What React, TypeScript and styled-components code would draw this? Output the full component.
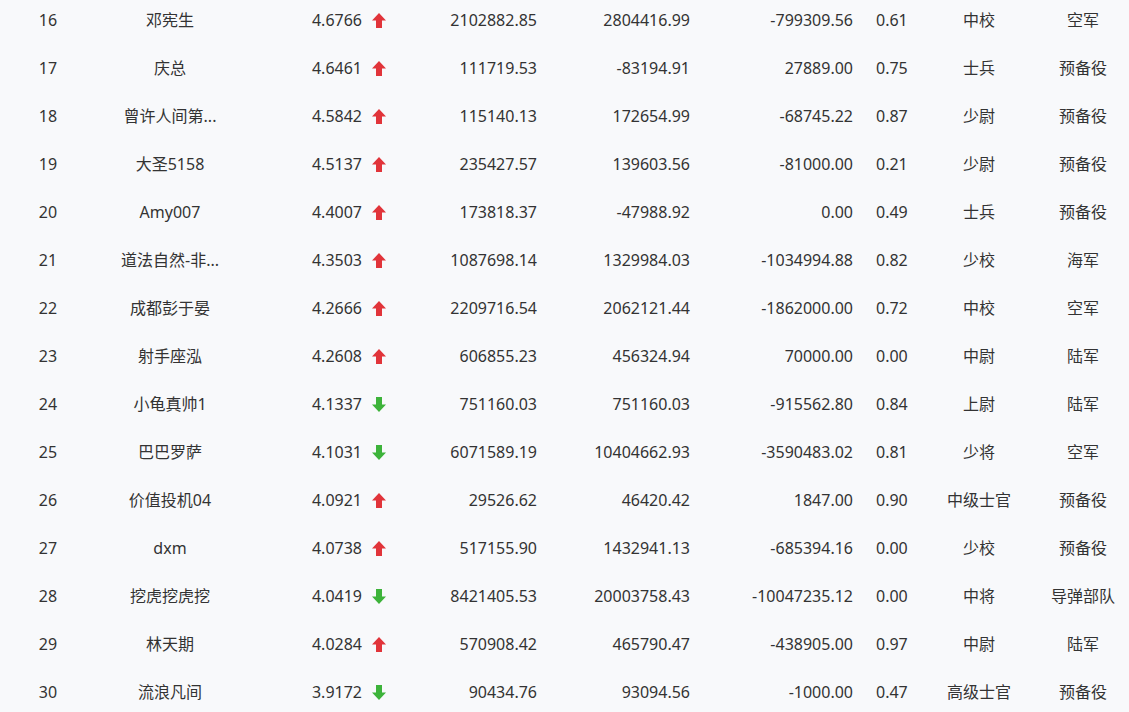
import React from "react";
import styled, { createGlobalStyle } from "styled-components";

const GlobalStyle = createGlobalStyle`
  html, body {
    margin: 0;
    padding: 0;
    overflow: hidden;
    background: #f8f9fb;
  }
  body {
    font-family: "Noto Sans", "Noto Sans CJK SC", sans-serif;
    color: #333;
  }
`;

const Page = styled.div`
  width: 1129px;
  height: 712px;
  overflow: hidden;
  background: #f8f9fb;
`;

const Table = styled.div`
  margin-top: -4px;
  display: flex;
  flex-direction: column;
`;

const Row = styled.div`
  display: grid;
  grid-template-columns: 96px 148px 156px 150px 150px 165px 65px 98px 101px;
  height: 48px;
  align-items: center;
  font-size: 16px;
  line-height: 20px;
  color: #333;
`;

type Align = "left" | "center" | "right";

const Cell = styled.div<{ $align?: Align; $pl?: number; $pr?: number }>`
  text-align: ${(p) => p.$align ?? "center"};
  padding-left: ${(p) => p.$pl ?? 0}px;
  padding-right: ${(p) => p.$pr ?? 0}px;
  white-space: nowrap;
  overflow: hidden;
  text-overflow: ellipsis;
`;

const ScoreCell = styled.div`
  display: flex;
  justify-content: flex-end;
  align-items: center;
  gap: 10px;
  padding-right: 14px;
`;

const ArrowIcon = ({ up }: { up: boolean }) => (
  <svg
    width="14"
    height="15"
    viewBox="0 0 14 15"
    style={{ display: "block", transform: up ? undefined : "rotate(180deg)" }}
  >
    <path
      d="M7 0 L14 7.5 L10 7.5 L10 15 L4 15 L4 7.5 L0 7.5 Z"
      fill={up ? "#e1343a" : "#3db33a"}
    />
  </svg>
);

type Item = [number, string, string, boolean, string, string, string, string, string, string];

const data: Item[] = [
  [16, "邓宪生", "4.6766", true, "2102882.85", "2804416.99", "-799309.56", "0.61", "中校", "空军"],
  [17, "庆总", "4.6461", true, "111719.53", "-83194.91", "27889.00", "0.75", "士兵", "预备役"],
  [18, "曾许人间第...", "4.5842", true, "115140.13", "172654.99", "-68745.22", "0.87", "少尉", "预备役"],
  [19, "大圣5158", "4.5137", true, "235427.57", "139603.56", "-81000.00", "0.21", "少尉", "预备役"],
  [20, "Amy007", "4.4007", true, "173818.37", "-47988.92", "0.00", "0.49", "士兵", "预备役"],
  [21, "道法自然-非...", "4.3503", true, "1087698.14", "1329984.03", "-1034994.88", "0.82", "少校", "海军"],
  [22, "成都彭于晏", "4.2666", true, "2209716.54", "2062121.44", "-1862000.00", "0.72", "中校", "空军"],
  [23, "射手座泓", "4.2608", true, "606855.23", "456324.94", "70000.00", "0.00", "中尉", "陆军"],
  [24, "小龟真帅1", "4.1337", false, "751160.03", "751160.03", "-915562.80", "0.84", "上尉", "陆军"],
  [25, "巴巴罗萨", "4.1031", false, "6071589.19", "10404662.93", "-3590483.02", "0.81", "少将", "空军"],
  [26, "价值投机04", "4.0921", true, "29526.62", "46420.42", "1847.00", "0.90", "中级士官", "预备役"],
  [27, "dxm", "4.0738", true, "517155.90", "1432941.13", "-685394.16", "0.00", "少校", "预备役"],
  [28, "挖虎挖虎挖", "4.0419", false, "8421405.53", "20003758.43", "-10047235.12", "0.00", "中将", "导弹部队"],
  [29, "林天期", "4.0284", true, "570908.42", "465790.47", "-438905.00", "0.97", "中尉", "陆军"],
  [30, "流浪凡间", "3.9172", false, "90434.76", "93094.56", "-1000.00", "0.47", "高级士官", "预备役"],
];

export default function App() {
  return (
    <Page>
      <GlobalStyle />
      <Table>
        {data.map((r) => (
          <Row key={r[0]}>
            <Cell>{r[0]}</Cell>
            <Cell $pl={24} $pr={24}>{r[1]}</Cell>
            <ScoreCell>
              <span>{r[2]}</span>
              <ArrowIcon up={r[3]} />
            </ScoreCell>
            <Cell $align="right" $pr={13}>{r[4]}</Cell>
            <Cell $align="right" $pr={10}>{r[5]}</Cell>
            <Cell $align="right" $pr={12}>{r[6]}</Cell>
            <Cell $align="left" $pl={11}>{r[7]}</Cell>
            <Cell>{r[8]}</Cell>
            <Cell $pl={9}>{r[9]}</Cell>
          </Row>
        ))}
      </Table>
    </Page>
  );
}
